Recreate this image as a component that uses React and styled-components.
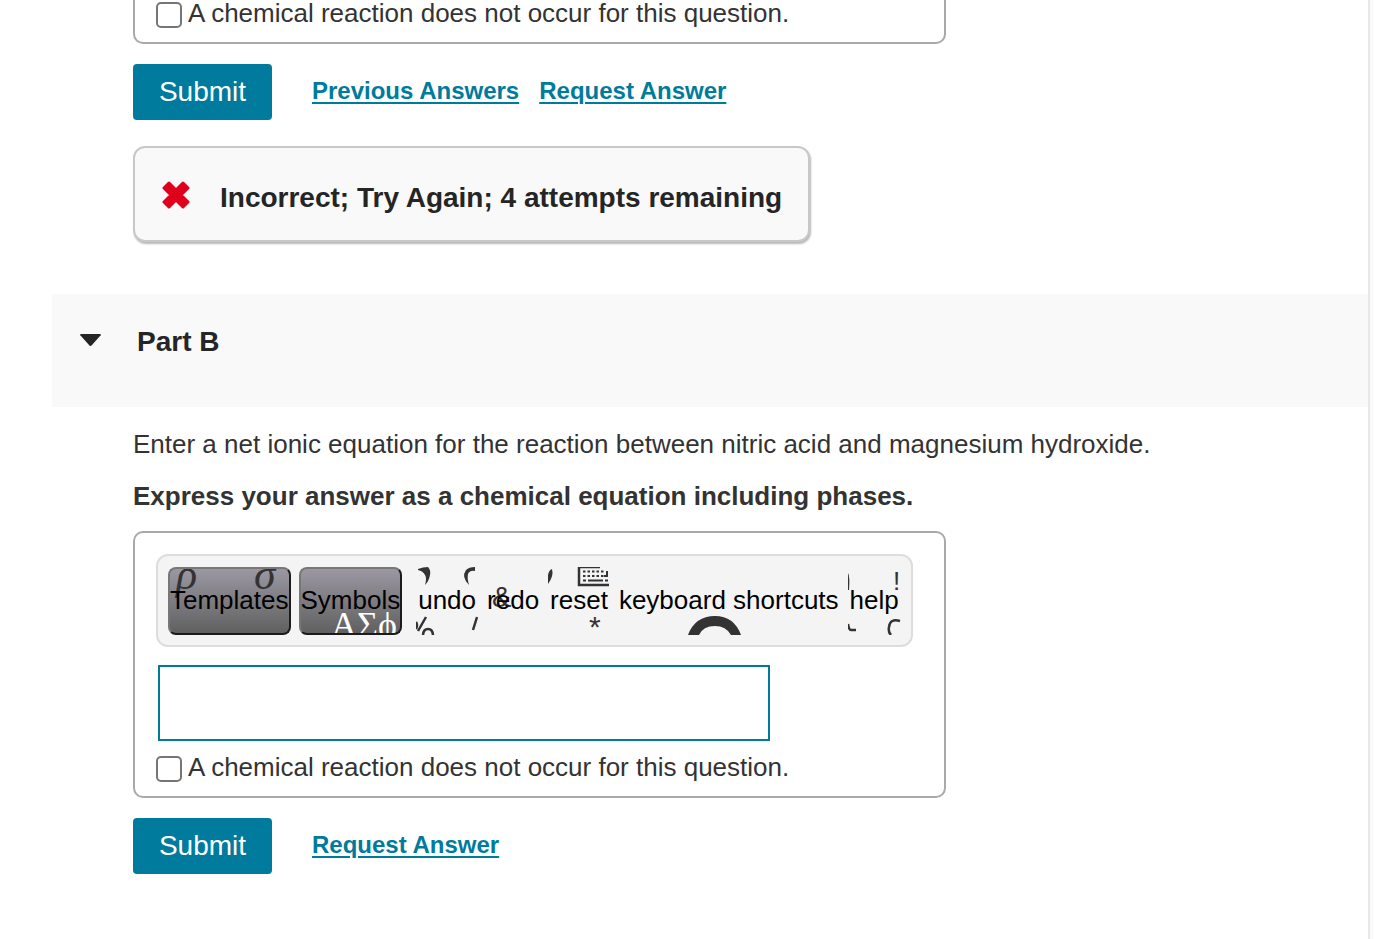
import React from 'react'
import styled, { createGlobalStyle } from 'styled-components'

const GlobalStyle = createGlobalStyle`
    body {
        margin: 0;
        background: #fafafa;
        color: #333333;
        font-family: "Liberation Sans", Arial, sans-serif;
    }
    * {
        box-sizing: border-box;
    }
`

const Page = styled.main`
    min-height: 100vh;
    margin-right: 4px;
    padding-left: 52px;
    background: #ffffff;
    border-right: 2px solid #e7e7e7;
`

const Section = styled.section`
    padding: 0 24px 0 81px;
`

const AnswerBox = styled.div`
    max-width: 813px;
    padding: ${props => props.$continued ? '0' : '21px'} 21px 12px;
    border: 2px solid #a9a9a9;
    border-top-width: ${props => props.$continued ? '0' : '2px'};
    border-radius: ${props => props.$continued ? '0 0 10px 10px' : '10px'};
`

const CheckLabel = styled.label`
    display: flex;
    align-items: center;
    gap: 6px;
    height: 30px;
    font-size: 26px;
    line-height: 26px;
    input {
        appearance: none;
        flex: none;
        width: 26px;
        height: 26px;
        margin: 0;
        background: #ffffff;
        border: 2px solid #767676;
        border-radius: 5px;
    }
    input:checked {
        background: #007b9d;
    }
    span {
        padding-bottom: 4px;
    }
`

const Actions = styled.div`
    display: flex;
    align-items: center;
    gap: 20px;
    margin-top: 20px;
`

const SubmitButton = styled.button`
    width: 139px;
    height: 56px;
    margin-right: 20px;
    padding: 0;
    border: 0;
    border-radius: 4px;
    background: #007b9d;
    color: #ffffff;
    font: 28px/56px "Liberation Sans", Arial, sans-serif;
`

const ActionLink = styled.a`
    padding-bottom: 2px;
    color: #007b9d;
    font-size: 24px;
    font-weight: bold;
    line-height: 28px;
    text-decoration: underline;
    text-decoration-thickness: 2px;
    text-underline-offset: 3px;
`

const Feedback = styled.div`
    display: flex;
    align-items: center;
    gap: 30px;
    width: fit-content;
    height: 96px;
    margin-top: 26px;
    padding: 2px 26px 0 27px;
    background: #f9f9f9;
    border: 2px solid #c8c8c8;
    border-radius: 12px;
    box-shadow: 1px 2px 2px #b8b8b8;
    color: #252525;
    font-size: 28px;
    font-weight: bold;
    p {
        margin: 0;
        padding-top: 6px;
    }
`

const PartHeader = styled.header`
    display: flex;
    align-items: center;
    gap: 36px;
    height: 113px;
    margin-top: 52px;
    padding: 0 28px 18px;
    background: #f9f9f9;
    color: #252525;
    button {
        display: flex;
        padding: 0 0 4px;
        border: 0;
        background: none;
    }
    h2 {
        margin: 0;
        font-size: 28px;
        line-height: 32px;
    }
`

const Prompt = styled.p`
    margin: ${props => props.$strong ? '20px 0 19px' : '21px 0 0'};
    font-size: 26px;
    font-weight: ${props => props.$strong ? 'bold' : 'normal'};
    line-height: 32px;
`

const Toolbar = styled.div`
    display: flex;
    gap: 8px;
    width: fit-content;
    padding: 11px 10px 10px;
    background: #f4f4f4;
    border: 2px solid #dddddd;
    border-radius: 12px;
`

const ToolButton = styled.button`
    position: relative;
    flex: none;
    height: 68px;
    padding: 0 2px 2px;
    overflow: hidden;
    border: 0;
    background: none;
    color: #000000;
    font: 26px/66px "Liberation Sans", Arial, sans-serif;
    svg {
        position: absolute;
        top: 0;
        left: 0;
        width: 100%;
        height: 100%;
    }
    span {
        position: relative;
    }
`

const MenuButton = styled(ToolButton)`
    padding: 0 0 2px;
    border: 2px solid;
    border-color: #777777 #1b1b1b #1b1b1b #777777;
    border-radius: 8px;
    background: linear-gradient(#9b98a2, #606060);
    line-height: 62px;
`

const ToolGroup = styled.div`
    display: flex;
    gap: 7px;
    margin-left: 6px;
`

const EquationInput = styled.input`
    display: block;
    width: calc(100% - 155px);
    height: 76px;
    margin: 18px 0 13px 2px;
    padding: 0 12px;
    border: 2px solid #007b9d;
    outline: 0;
    background: #ffffff;
    font: 26px "Liberation Sans", Arial, sans-serif;
`

const Sprite = ({ children }) => (
    <svg aria-hidden="true" fill="#333333">{children}</svg>
)

const NoReaction = () => (
    <CheckLabel>
        <input type="checkbox" />
        <span>A chemical reaction does not occur for this question.</span>
    </CheckLabel>
)

const EquationToolbar = () => (
    <Toolbar>
        <MenuButton type="button">
            <Sprite>
                <g fontFamily="Liberation Serif" fontStyle="italic" fontSize="44">
                    <text x="6" y="20">ρ</text>
                    <text x="84" y="20">σ</text>
                </g>
            </Sprite>
            <span>Templates</span>
        </MenuButton>
        <MenuButton type="button">
            <Sprite>
                <text x="30" y="68" fill="#ffffff" fontFamily="Liberation Serif" fontSize="36">ΑΣϕ</text>
            </Sprite>
            <span>Symbols</span>
        </MenuButton>
        <ToolGroup>
            <ToolButton type="button">
                <Sprite>
                    <path d="M2 2Q7 0 12 0Q15 3 14 8Q13 14 9 18Q11 11 9 8Q7 4 2 3Z" />
                    <path d="M50 3Q53 0 59 0V4Q54 3 52 7Q51 11 53 18Q45 10 50 3Z" />
                    <path d="M0 55Q2 58 0 62M10 50L2 64M7 69Q7 62 12 62Q17 62 17 69M61 50L57 63" fill="none" stroke="#333333" strokeWidth="2.5" />
                </Sprite>
                <span>undo</span>
            </ToolButton>
            <ToolButton type="button">
                <Sprite>
                    <text x="7" y="40" fontFamily="Liberation Sans" fontSize="29">&amp;</text>
                </Sprite>
                <span>redo</span>
            </ToolButton>
            <ToolButton type="button">
                <Sprite>
                    <path d="M0 8Q1 3 4 2Q6 9 0 17Z" />
                    <path d="M31 0V18H61M31 0H52" fill="none" stroke="#333333" strokeWidth="2.5" />
                    <path d="M35 4.5H56M35 9H56" fill="none" stroke="#333333" strokeWidth="2" strokeDasharray="2.5 2" />
                    <path d="M35 13.5H38M40 13.5H55M57 13.5H60M59 4V9H56" fill="none" stroke="#333333" strokeWidth="2" />
                    <text x="41" y="70" fontFamily="Liberation Sans" fontSize="30">*</text>
                </Sprite>
                <span>reset</span>
            </ToolButton>
            <ToolButton type="button">
                <Sprite>
                    <path d="M71 68Q78 49 98 49Q117 49 124 68H114Q109 59 98 59Q86 59 82 68Z" />
                </Sprite>
                <span>keyboard shortcuts</span>
            </ToolButton>
            <ToolButton type="button">
                <Sprite>
                    <path d="M0 6Q2 9 1 23H0Z" />
                    <text x="45" y="23" fontFamily="Liberation Sans" fontSize="26">!</text>
                    <path d="M0 57Q1 63 3 63H8M52 54Q42 51 41 60Q40 65 43 68" fill="none" stroke="#333333" strokeWidth="2.5" />
                </Sprite>
                <span>help</span>
            </ToolButton>
        </ToolGroup>
    </Toolbar>
)

const App = () => {
    return (
        <>
            <GlobalStyle />
            <Page>
                <Section>
                    <AnswerBox $continued>
                        <NoReaction />
                    </AnswerBox>
                    <Actions>
                        <SubmitButton type="button">Submit</SubmitButton>
                        <ActionLink href="#previous">Previous Answers</ActionLink>
                        <ActionLink href="#request-a">Request Answer</ActionLink>
                    </Actions>
                    <Feedback>
                        <svg width="28" height="28" viewBox="0 0 28 28" aria-hidden="true">
                            <path
                                d="M7 2L14 9L21 2L26 7L19 14L26 21L21 26L14 19L7 26L2 21L9 14L2 7Z"
                                fill="#e0001b"
                                stroke="#e0001b"
                                strokeWidth="3"
                                strokeLinejoin="round"
                            />
                        </svg>
                        <p>Incorrect; Try Again; 4 attempts remaining</p>
                    </Feedback>
                </Section>
                <PartHeader>
                    <button type="button" aria-label="Collapse Part B">
                        <svg width="21" height="12" viewBox="0 0 21 12" aria-hidden="true">
                            <path d="M1 0H20Q22 1 20 2L12 11Q10 13 9 11L1 2Q-1 1 1 0Z" fill="#252525" />
                        </svg>
                    </button>
                    <h2>Part B</h2>
                </PartHeader>
                <Section>
                    <Prompt>Enter a net ionic equation for the reaction between nitric acid and magnesium hydroxide.</Prompt>
                    <Prompt $strong>Express your answer as a chemical equation including phases.</Prompt>
                    <AnswerBox>
                        <EquationToolbar />
                        <EquationInput type="text" aria-label="Chemical equation" />
                        <NoReaction />
                    </AnswerBox>
                    <Actions>
                        <SubmitButton type="button">Submit</SubmitButton>
                        <ActionLink href="#request-b">Request Answer</ActionLink>
                    </Actions>
                </Section>
            </Page>
        </>
    )
}

export default App;
